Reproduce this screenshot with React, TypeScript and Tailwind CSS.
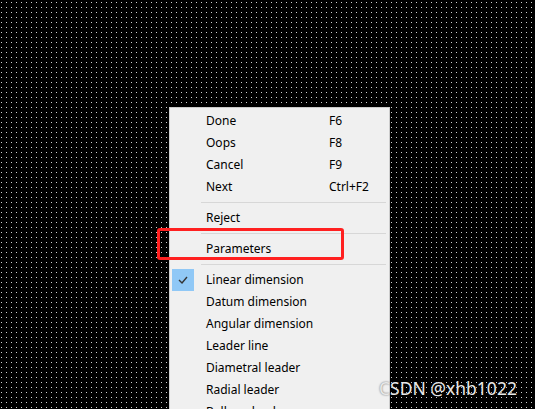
const font = { fontFamily: '"Noto Sans", "Noto Sans CJK SC", sans-serif' };

type Item =
  | { kind: 'item'; label: string; shortcut?: string; checked?: boolean }
  | { kind: 'sep' };

const items: Item[] = [
  { kind: 'item', label: 'Done', shortcut: 'F6' },
  { kind: 'item', label: 'Oops', shortcut: 'F8' },
  { kind: 'item', label: 'Cancel', shortcut: 'F9' },
  { kind: 'item', label: 'Next', shortcut: 'Ctrl+F2' },
  { kind: 'sep' },
  { kind: 'item', label: 'Reject' },
  { kind: 'sep' },
  { kind: 'item', label: 'Parameters' },
  { kind: 'sep' },
  { kind: 'item', label: 'Linear dimension', checked: true },
  { kind: 'item', label: 'Datum dimension' },
  { kind: 'item', label: 'Angular dimension' },
  { kind: 'item', label: 'Leader line' },
  { kind: 'item', label: 'Diametral leader' },
  { kind: 'item', label: 'Radial leader' },
  { kind: 'item', label: 'Balloon leader' },
];

function DotGrid() {
  return (
    <svg className="absolute inset-0" width="535" height="409">
      <defs>
        <pattern id="dots" width="5" height="5" patternUnits="userSpaceOnUse">
          <rect x="1" y="2" width="1" height="1" fill="#cfcfcf" />
        </pattern>
      </defs>
      <rect width="535" height="409" fill="url(#dots)" />
    </svg>
  );
}

function ContextMenu() {
  return (
    <div
      className="absolute left-[169px] top-[107px] w-[221px] border border-[#cccccc] bg-[#f0f0f0] pt-[2px] pl-[2px] pr-[2px] text-[12px] text-black"
      style={font}
    >
      {items.map((item, i) =>
        item.kind === 'sep' ? (
          <div key={i} className="flex h-[9px] items-center pl-[29px] pr-[1px]">
            <div className="h-px w-full bg-[#d7d7d7]" />
          </div>
        ) : (
          <div key={i} className="flex h-[22px] items-center">
            <div className="flex w-[34px] justify-start">
              {item.checked ? (
                <div className="flex h-[22px] w-[22px] items-center justify-center bg-[#90c8f6]">
                  <svg width="10" height="8" viewBox="0 0 10 8">
                    <path d="M1 4 L4 7 L9 1" fill="none" stroke="#333" strokeWidth="1.4" />
                  </svg>
                </div>
              ) : null}
            </div>
            <span className="w-[123px] whitespace-nowrap">{item.label}</span>
            <span className="whitespace-nowrap">{item.shortcut}</span>
          </div>
        )
      )}
    </div>
  );
}

export default function App() {
  return (
    <div className="relative h-[409px] w-[535px] overflow-hidden bg-black">
      <DotGrid />
      <ContextMenu />
      {/* annotation box */}
      <div className="absolute left-[157px] top-[228px] h-[32px] w-[187px] rounded-[3px] border-[3px] border-[#ff2020]" />
      <div
        className="absolute left-[379px] top-[375px] text-[17.5px] text-[#e8e8e8] [text-shadow:0_0_2px_rgba(0,0,0,0.6)]"
        style={font}
      >
        CSDN @xhb1022
      </div>
    </div>
  );
}
